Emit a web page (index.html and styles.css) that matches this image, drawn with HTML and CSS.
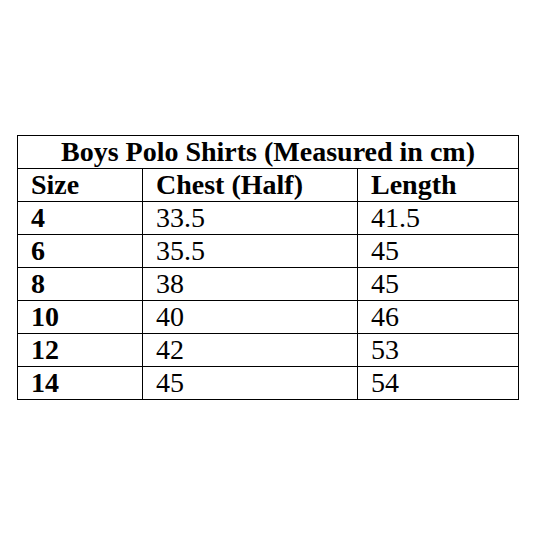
FILE: index.html
```html
<!DOCTYPE html>
<html>
<head>
<meta charset="utf-8">
<link rel="stylesheet" href="styles.css">
</head>
<body>
<div class="size-table">
  <div class="cell title">Boys Polo Shirts (Measured in cm)</div>
  <div class="cell head">Size</div>
  <div class="cell head">Chest (Half)</div>
  <div class="cell head">Length</div>
  <div class="cell head">4</div><div class="cell">33.5</div><div class="cell">41.5</div>
  <div class="cell head">6</div><div class="cell">35.5</div><div class="cell">45</div>
  <div class="cell head">8</div><div class="cell">38</div><div class="cell">45</div>
  <div class="cell head">10</div><div class="cell">40</div><div class="cell">46</div>
  <div class="cell head">12</div><div class="cell">42</div><div class="cell">53</div>
  <div class="cell head">14</div><div class="cell">45</div><div class="cell">54</div>
</div>
</body>
</html>
```
FILE: styles.css
```css
html, body {
  margin: 0;
  padding: 0;
  background: #fff;
}
body {
  padding: 135px 0 0 17px;
  color: #000;
}
.size-table {
  display: grid;
  grid-template-columns: 125px 215px 161px;
  width: 501px;
  border-top: 1px solid #000;
  border-left: 1px solid #000;
}
.cell {
  font-family: "Liberation Serif", "Times New Roman", serif;
  height: 32px;
  line-height: 32px;
  font-size: 28px;
  padding-left: 13px;
  border-right: 1px solid #000;
  border-bottom: 1px solid #000;
  white-space: nowrap;
  overflow: hidden;
}
.title {
  grid-column: 1 / span 3;
  padding-left: 0;
  text-align: center;
  font-weight: bold;
}
.head {
  font-weight: bold;
}
```
